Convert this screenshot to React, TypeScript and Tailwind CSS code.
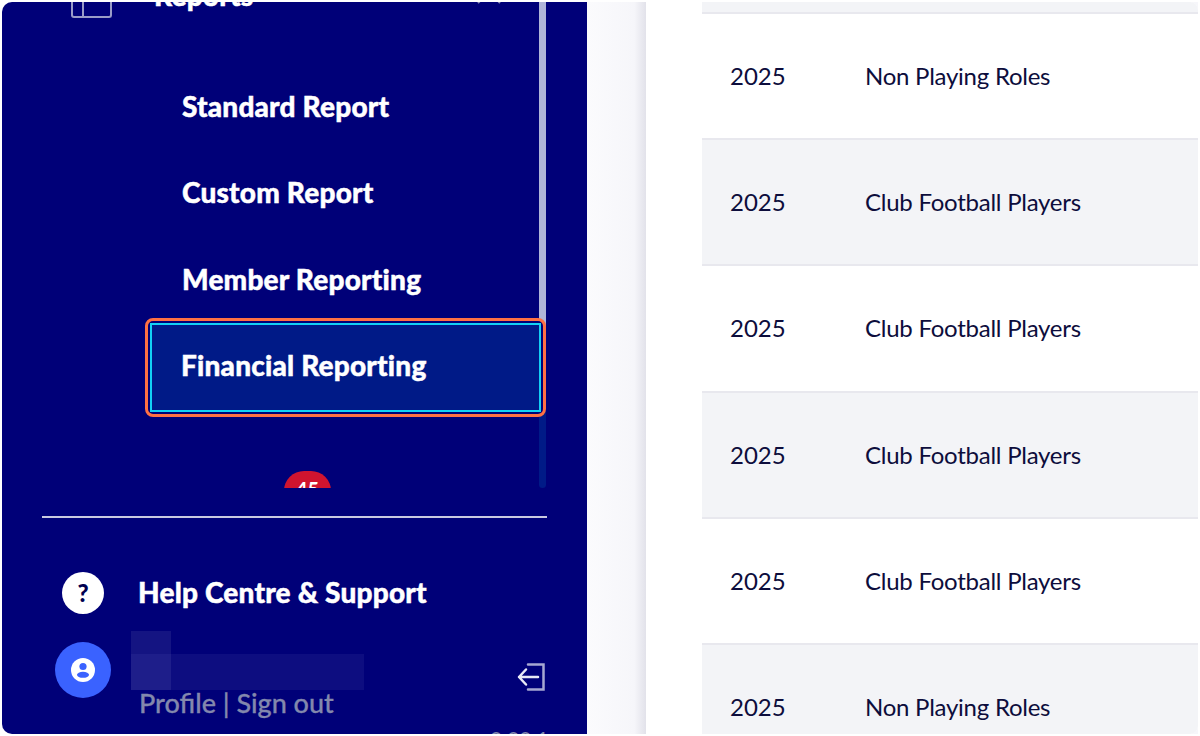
import React from 'react';

const rows = [
  { year: '2025', type: 'Non Playing Roles' },
  { year: '2025', type: 'Club Football Players' },
  { year: '2025', type: 'Club Football Players' },
  { year: '2025', type: 'Club Football Players' },
  { year: '2025', type: 'Club Football Players' },
  { year: '2025', type: 'Non Playing Roles' },
];

const navItems = ['Standard Report', 'Custom Report', 'Member Reporting'];

const navText = 'text-[28px] font-black text-white tracking-[0.2px] [-webkit-text-stroke:0.45px_#ffffff]';

export default function App() {
  return (
    <div className="h-[736px] w-[1200px] overflow-hidden bg-white p-[2px] flex font-['Lato',sans-serif]">
      {/* Sidebar */}
      <aside className="w-[585px] h-[732px] shrink-0 bg-[#000078] rounded-l-[10px] overflow-hidden flex flex-col">
        <div className="relative h-[486px] shrink-0 overflow-hidden">
          {/* Scrollbar */}
          <div className="absolute left-[537px] top-0 w-[7px] h-[486px] rounded-b bg-[#001a87]">
            <div className="h-[345px] bg-[#b0b5d8]" />
          </div>

          {/* Reports row, scrolled mostly out of view */}
          <div className="-mt-[16px] h-[32px] pl-[69px] flex items-end">
            <div className="w-[41px] h-[30px] rounded-[3px] border-2 border-[#9a9cc8] border-t-0 flex shrink-0">
              <div className="w-[11px] border-r-2 border-[#9a9cc8]" />
            </div>
            <span className={`ml-[42px] mb-[8px] leading-[30px] ${navText}`}>Reports</span>
            <svg viewBox="0 0 24 13" className="ml-auto mr-[86px] mt-[5px] w-[24px] h-[13px] self-start text-[#8f91b8]" fill="none" stroke="currentColor" strokeWidth="2">
              <path d="M1 12 12 1 23 12" />
            </svg>
          </div>

          <div className="mt-[46px] flex flex-col">
            {navItems.map(item => (
              <div key={item} className={`h-[86.5px] pl-[180px] pb-[3px] flex items-center ${navText}`}>
                {item}
              </div>
            ))}
          </div>

          {/* Selected item with focus rings */}
          <div className="relative z-10 -mt-[5.5px] ml-[143px] w-[401px] h-[99px] rounded-[8px] border-[3px] border-[#ff7043] bg-[#000078] p-[2px]">
            <div className={`h-full border-2 border-[#12d0f5] bg-[#001a87] pl-[29px] pb-[5px] flex items-center ${navText}`}>
              Financial Reporting
            </div>
          </div>

          <div className="mt-[54px] ml-[282px] w-[47px] h-[40px] rounded-full bg-[#d0142f] text-white text-[20px] font-bold flex justify-center pt-[6px] leading-[24px]">
            45
          </div>
        </div>

        <div className="mt-[27.5px] ml-[40px] w-[505px] h-[2px] bg-[#c8c9e0] shrink-0" />

        {/* Help */}
        <div className="mt-[54.5px] ml-[60px] flex items-center shrink-0">
          <div className="w-[42px] h-[42px] rounded-full bg-white flex items-center justify-center text-[#000050] text-[24px] font-black">?</div>
          <span className={`ml-[34px] -mt-[2px] ${navText}`}>Help Centre &amp; Support</span>
        </div>

        {/* User */}
        <div className="relative mt-[28px] ml-[53px] flex shrink-0">
          <div className="w-[56px] h-[56px] rounded-full bg-[#3a62ff] flex items-center justify-center">
            <svg viewBox="0 0 24 24" className="w-[24px] h-[24px]">
              <circle cx="12" cy="12" r="12" fill="#ffffff" />
              <circle cx="12" cy="8.5" r="3.6" fill="#3a62ff" />
              <ellipse cx="12" cy="16.8" rx="6" ry="3" fill="#3a62ff" />
            </svg>
          </div>
          <div className="ml-[28px] pt-[45px] text-[27px] leading-[32px] font-medium text-[#8388ad] whitespace-nowrap [-webkit-text-stroke:0.3px_#8388ad]">
            Profile | Sign out
          </div>
          {/* Blurred name */}
          <div className="absolute left-[76px] -top-[11px] w-[40px] h-[23px] bg-[#141482]" />
          <div className="absolute left-[76px] top-[12px] w-[40px] h-[36px] bg-[#1e1e8a]" />
          <div className="absolute left-[116px] top-[12px] w-[193px] h-[36px] bg-[#0d0d80]" />
          <svg viewBox="0 0 28 28" className="absolute left-[462px] top-[21px] w-[28px] h-[28px]" fill="none">
            <path d="M11 1.5H26.5V26.5H11" stroke="#a6a8d2" strokeWidth="2.5" strokeLinecap="round" />
            <path d="M21 14H2M9 6.5 2 14l7 7.5" stroke="#e8e9f6" strokeWidth="2.5" strokeLinecap="round" strokeLinejoin="round" />
          </svg>
          <span className="absolute left-[435px] top-[81px] text-[21px] text-[#8388ad]">0.00.1</span>
        </div>
      </aside>

      {/* Main */}
      <main className="flex-1 h-[732px] flex bg-[#f6f6fa]">
        <div className="w-[59px] shrink-0 bg-gradient-to-r from-[#fbfbfd] via-[#f6f6fa] via-80% to-[#e2e2ea]" />
        <div className="flex-1 bg-white rounded-r-[8px] overflow-hidden flex">
          <div className="w-[56px] shrink-0" />
          <div className="flex-1 flex flex-col">
            <div className="h-[10px] shrink-0 bg-[#f3f4f7]" />
            {rows.map((r, i) => (
              <div
                key={i}
                className={`h-[126.2px] shrink-0 border-t-2 border-[#e8e8ee] flex items-center text-[24px] text-[#0d0d3c] ${i % 2 === 1 ? 'bg-[#f3f4f7]' : 'bg-white'}`}
              >
                <span className="ml-[28px] w-[135px]">{r.year}</span>
                <span className="tracking-[-0.25px]">{r.type}</span>
              </div>
            ))}
          </div>
        </div>
      </main>
    </div>
  );
}
